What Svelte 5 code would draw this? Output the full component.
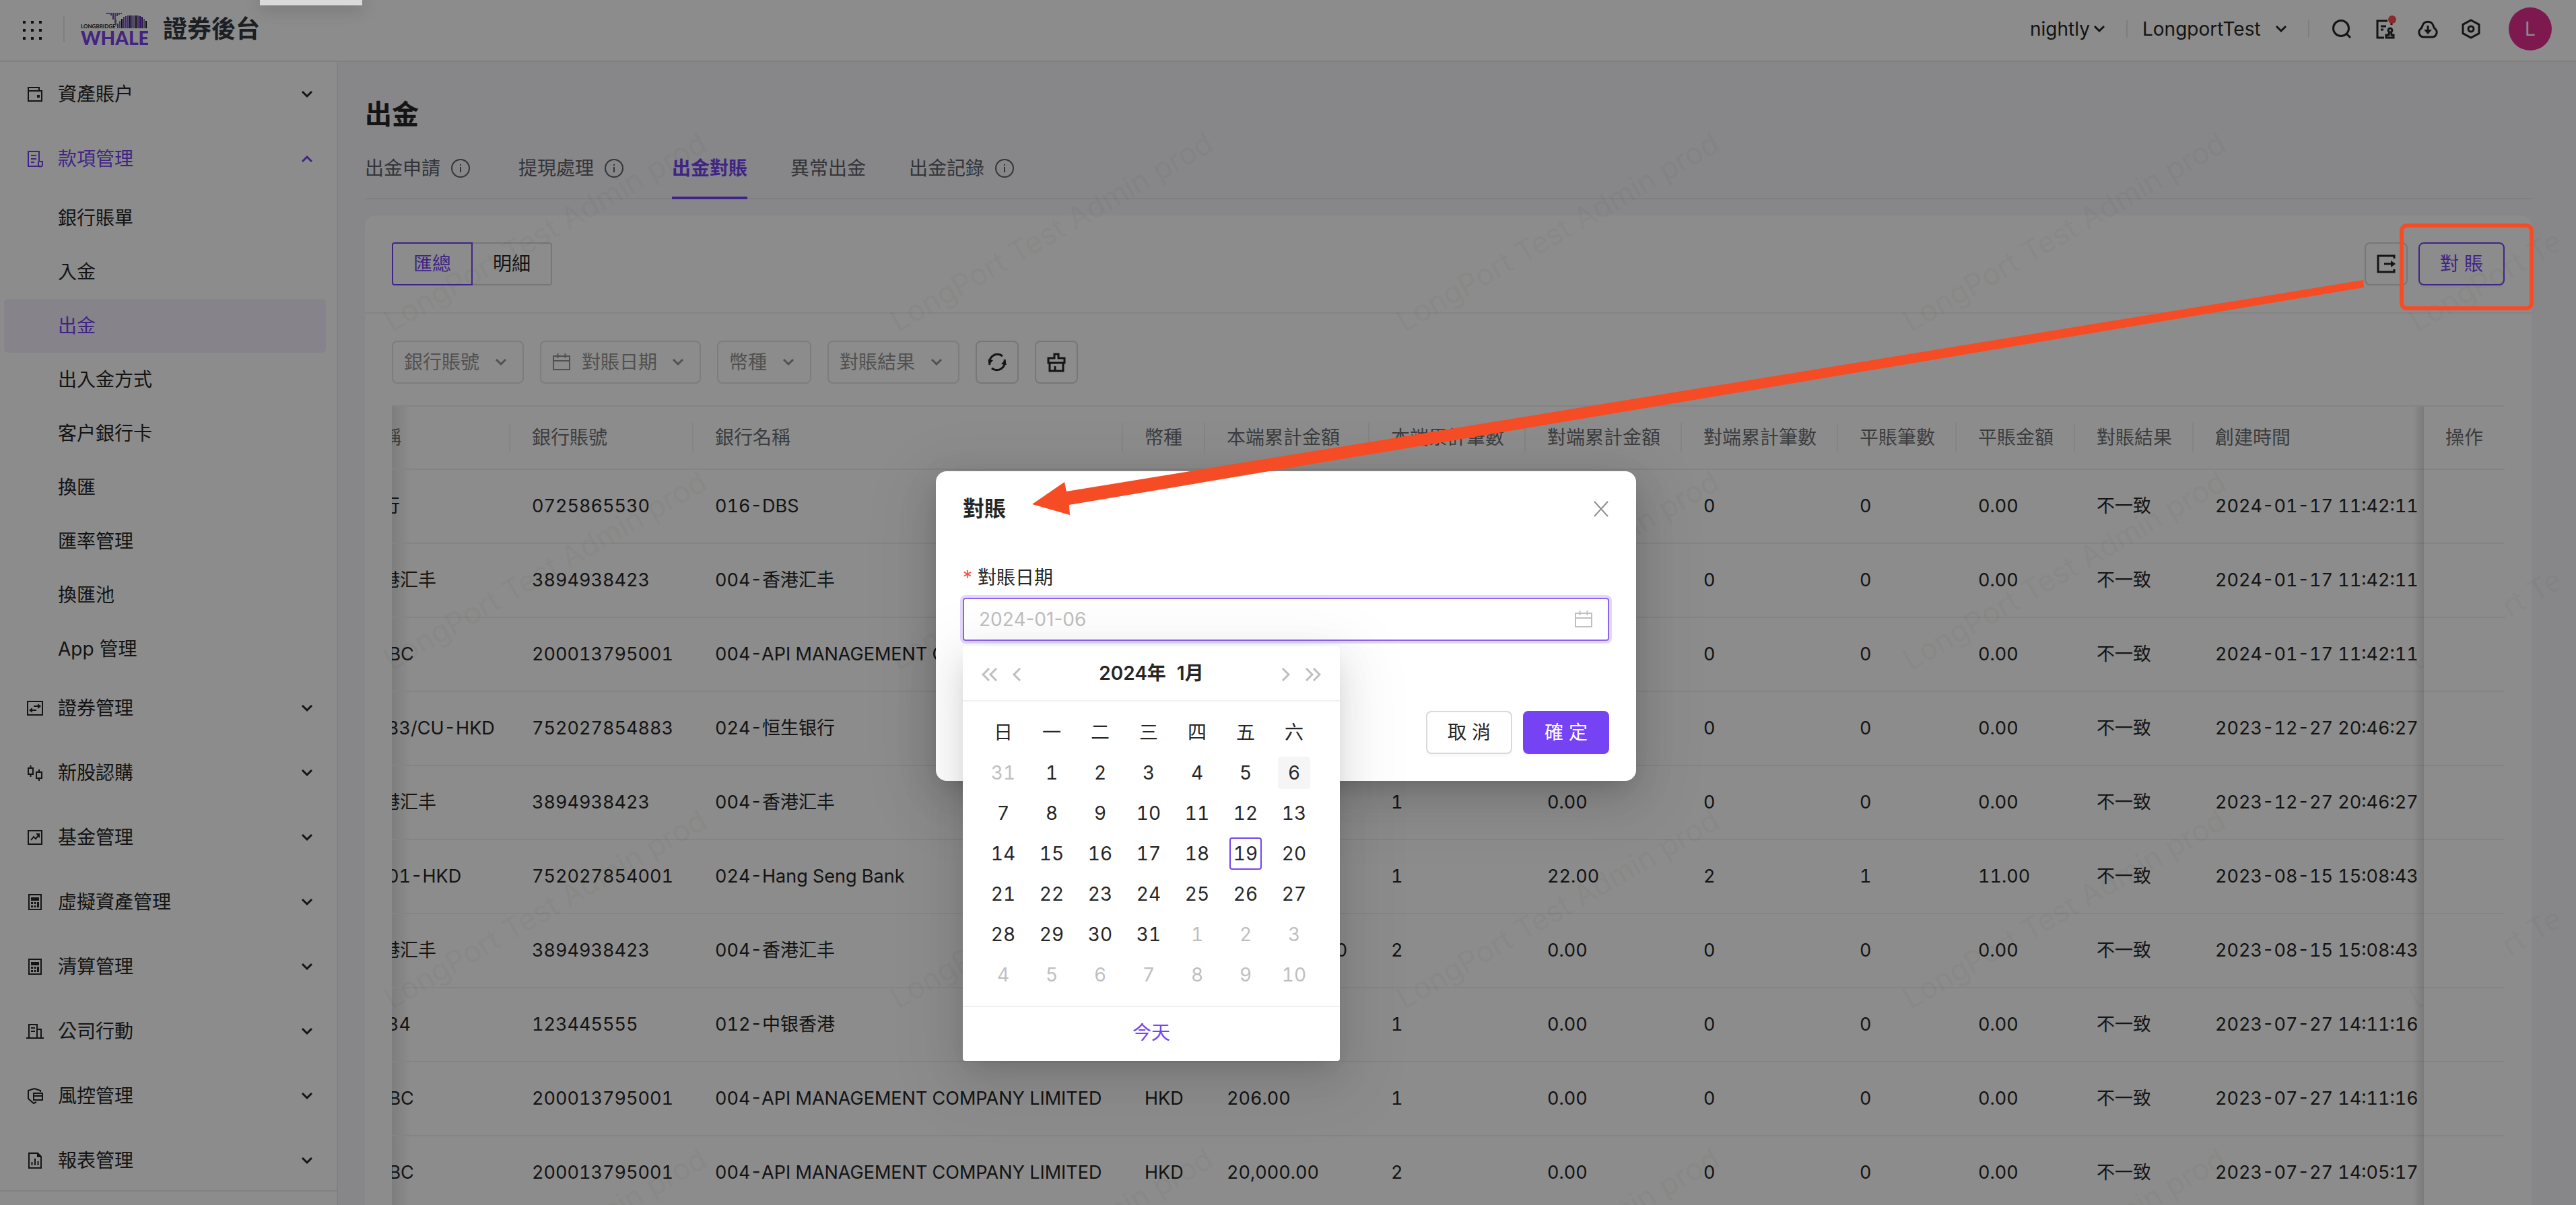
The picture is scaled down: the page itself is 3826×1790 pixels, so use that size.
<script>
  const menuBefore = [{ label: '資產賬户', icon: 'wallet' }];
  const subItems = ['銀行賬單', '入金', '出金', '出入金方式', '客户銀行卡', '換匯', '匯率管理', '換匯池', 'App 管理'];
  const menuAfter = [
    { label: '證券管理', icon: 'exchange' },
    { label: '新股認購', icon: 'candles' },
    { label: '基金管理', icon: 'trend' },
    { label: '虛擬資產管理', icon: 'calc' },
    { label: '清算管理', icon: 'calc' },
    { label: '公司行動', icon: 'building' },
    { label: '風控管理', icon: 'shield' },
    { label: '報表管理', icon: 'report' }
  ];

  const tabs = [
    { label: '出金申請', info: true },
    { label: '提現處理', info: true },
    { label: '出金對賬', active: true },
    { label: '異常出金' },
    { label: '出金記錄', info: true }
  ];

  const columns = [
    '名稱', '銀行賬號', '銀行名稱', '幣種', '本端累計金額', '本端累計筆數', '對端累計金額',
    '對端累計筆數', '平賬筆數', '平賬金額', '對賬結果', '創建時間', '操作'
  ];

  const rows = [
    ['銀行', '0725865530', '016-DBS', 'HKD', '0.00', '1', '0.00', '0', '0', '0.00', '不一致', '2024-01-17 11:42:11'],
    ['香港汇丰', '3894938423', '004-香港汇丰', 'HKD', '0.00', '1', '0.00', '0', '0', '0.00', '不一致', '2024-01-17 11:42:11'],
    ['HSBC', '200013795001', '004-API MANAGEMENT COMPANY LIMITED', 'HKD', '0.00', '1', '0.00', '0', '0', '0.00', '不一致', '2024-01-17 11:42:11'],
    ['4883/CU-HKD', '752027854883', '024-恒生银行', 'HKD', '0.00', '1', '0.00', '0', '0', '0.00', '不一致', '2023-12-27 20:46:27'],
    ['香港汇丰', '3894938423', '004-香港汇丰', 'HKD', '100.00', '1', '0.00', '0', '0', '0.00', '不一致', '2023-12-27 20:46:27'],
    ['4001-HKD', '752027854001', '024-Hang Seng Bank', 'HKD', '11.00', '1', '22.00', '2', '1', '11.00', '不一致', '2023-08-15 15:08:43'],
    ['香港汇丰', '3894938423', '004-香港汇丰', 'HKD', '2,000,000.00', '2', '0.00', '0', '0', '0.00', '不一致', '2023-08-15 15:08:43'],
    ['1234', '123445555', '012-中银香港', 'HKD', '100.00', '1', '0.00', '0', '0', '0.00', '不一致', '2023-07-27 14:11:16'],
    ['HSBC', '200013795001', '004-API MANAGEMENT COMPANY LIMITED', 'HKD', '206.00', '1', '0.00', '0', '0', '0.00', '不一致', '2023-07-27 14:11:16'],
    ['HSBC', '200013795001', '004-API MANAGEMENT COMPANY LIMITED', 'HKD', '20,000.00', '2', '0.00', '0', '0', '0.00', '不一致', '2023-07-27 14:05:17']
  ];

  const weekdays = ['日', '一', '二', '三', '四', '五', '六'];
  const weeks = Array.from({ length: 6 }, (_, w) =>
    Array.from({ length: 7 }, (_, d) => {
      const n = w * 7 + d;
      if (n === 0) return { day: 31, out: true };
      if (n > 31) return { day: n - 31, out: true };
      return { day: n, hover: n === 6, today: n === 19 };
    })
  );

  /* x, top, bottom, tone of each stripe of the whale */
  const stripes = [
    [38, 0, 2, 'v'], [41, 0, 2, 'v'], [44, 0, 4, 'v'], [47, 0, 10, 'v'], [50, 0, 16, 'g'], [53, 0, 5, 'v'],
    [56, 0, 3, 'g'], [59, 0, 2, 'v'], [51, 10, 19, 'g'], [54, 16, 23, 'v'], [57, 12, 23, 'g'], [60, 9, 23, 'k'], [63, 6, 23, 'v'],
    [66, 5, 23, 'v'], [69, 4, 23, 'v'], [72, 4, 23, 'k'], [75, 4, 23, 'v'], [78, 4, 23, 'g'], [81, 4, 23, 'k'],
    [84, 4, 23, 'v'], [87, 5, 23, 'd'], [90, 6, 23, 'd'], [93, 9, 23, 'g'], [96, 12, 23, 'k']
  ];
</script>

{#snippet chevron(up)}
  <svg class="chev" viewBox="0 0 20 12" aria-hidden="true">
    <path d={up ? 'M3 10L10 3l7 7' : 'M3 2l7 7 7-7'} />
  </svg>
{/snippet}

{#snippet calendarIcon()}
  <svg class="ico cal-ico" viewBox="0 0 28 28" aria-hidden="true">
    <path d="M2 5h24v20H2zM2 12h24M8.500 1v7M19.500 1v7" />
  </svg>
{/snippet}

{#snippet menuIcon(name)}
  <svg class="ico" viewBox="0 0 28 28" aria-hidden="true">
    {#if name === 'wallet'}
      <path d="M20 9V4H4v20h20V9H4" /><path class="fill" d="M17 15h4v4h-4z" />
    {:else if name === 'funds'}
      <path d="M20 18V3H4v22h17M20 18h5v4a3 3 0 0 1-6 1v-5M8 9h8M8 14h8M8 19h5" />
    {:else if name === 'exchange'}
      <path d="M3 4h22v20H3z" /><path d="M12 11h9M16 17H7" /><path class="fill" d="M18 7l5 4-5 4zM10 13l-5 4 5 4z" />
    {:else if name === 'candles'}
      <path d="M4 7h7v9H4zM7.500 3v4M7.500 16v4M16 13h8v9h-8zM20 9v4M20 22v4" />
    {:else if name === 'trend'}
      <path d="M4 4h20v20H4z" /><path d="M8 18l4-5 3 3 5-6" /><path class="fill" d="M15 8h6v7z" />
    {:else if name === 'calc'}
      <path d="M5 3h18v22H5z" />
      <path class="fill" d="M8 7h12v5H8zM8 14h3v3H8zM12.500 14h3v3h-3zM8 19h3v3H8zM12.500 19h3v3h-3zM17 14h3v8h-3z" />
    {:else if name === 'building'}
      <path d="M1 24h26M5 24V4h12v20M17 11h6v13M8 9h6M8 14h6" />
    {:else if name === 'shield'}
      <path d="M22 8V6L13 3 4 6v12l8 7 4-2" /><path d="M12 10h13v10H12zM12 14h13" />
    {:else if name === 'report'}
      <path d="M5 3h13l5 5v17H5z" /><path d="M9.500 16v5M14 11v10M18.500 15v6" /><path class="fill" d="M17 2l7 7h-7z" />
    {/if}
  </svg>
{/snippet}

{#snippet menuItem(item)}
  <button class="item" type="button">
    {@render menuIcon(item.icon)}
    <span>{item.label}</span>
    {@render chevron(false)}
  </button>
{/snippet}

<div class="page">
  <header class="top">
    <button class="apps" type="button" aria-label="應用">
      {#each Array(9) as _}<i></i>{/each}
    </button>
    <span class="rule tall"></span>
    <svg class="logo" viewBox="0 0 100 50" role="img" aria-label="Longbridge Whale">
      {#each stripes as [x, top, bottom, tone]}
        <rect class={tone} {x} y={top + 1} width="2" height={bottom - top} />
      {/each}
      <text class="brand-small" x="0" y="24">LONGBRIDGE</text>
      <text class="brand-big" x="0" y="49">WHALE</text>
    </svg>
    <strong class="product">證券後台</strong>
    <div class="right">
      <label class="env">
        <select aria-label="環境"><option>nightly</option></select>
        {@render chevron(false)}
      </label>
      <span class="rule"></span>
      <label class="org">
        <select aria-label="機構"><option>LongportTest</option></select>
        {@render chevron(false)}
      </label>
      <span class="rule"></span>
      <div class="tools">
        <button type="button" aria-label="搜索">
          <svg class="tool" viewBox="0 0 32 32"><circle cx="15" cy="15" r="11.500" /><path d="M23 23l6 6" /></svg>
        </button>
        <button type="button" class="badge" aria-label="審批">
          <svg class="tool" viewBox="0 0 32 32">
            <path d="M20 4H5v25h10M26 7v3M10 12h8M10 17h4" />
            <path d="M24 15a3 3 0 0 1 1.500 5.500l.5 4.500h3v4H18v-4h4l.5-4.500A3 3 0 0 1 24 15z" />
          </svg>
        </button>
        <button type="button" aria-label="下載">
          <svg class="tool" viewBox="0 0 32 32">
            <path d="M9 28a7 7 0 0 1-4-12c2-1 2-2 3-5a8.500 8.500 0 0 1 16 0c1 3 1 4 3 5a7 7 0 0 1-4 12zM16 11v8" />
            <path class="fill" d="M10 17h12l-6 7z" />
          </svg>
        </button>
        <button type="button" aria-label="設置">
          <svg class="tool" viewBox="0 0 32 32"><path d="M16 3l12 6.500v13L16 29 4 22.500v-13z" /><circle cx="16" cy="16" r="4" /></svg>
        </button>
      </div>
      <button class="avatar" type="button">L</button>
    </div>
  </header>

  <div class="body">
    <aside class="side">
      <nav class="menu">
        {#each menuBefore as item}{@render menuItem(item)}{/each}
        <button class="item open" type="button">
          {@render menuIcon('funds')}
          <span>款項管理</span>
          {@render chevron(true)}
        </button>
        {#each subItems as label}
          <a href="#top" class="sub" class:current={label === '出金'}>{label}</a>
        {/each}
        {#each menuAfter as item}{@render menuItem(item)}{/each}
      </nav>
      <div class="side-foot"></div>
    </aside>

    <main class="main">
      <svg class="watermark" aria-hidden="true">
        <defs>
          <pattern id="mark" width="752" height="503" patternUnits="userSpaceOnUse">
            <text x="80" y="402" transform="rotate(-30 80 402)">LongPort Test Admin prod</text>
          </pattern>
        </defs>
        <rect width="100%" height="100%" fill="url(#mark)" />
      </svg>

      <h1>出金</h1>
      <div class="tabs" role="tablist">
        {#each tabs as tab}
          <button class="tab" class:active={tab.active} type="button" role="tab" aria-selected={!!tab.active}>
            {tab.label}
            {#if tab.info}
              <svg class="info" viewBox="0 0 28 28" aria-hidden="true">
                <circle cx="14" cy="14" r="13" /><path d="M14 12v8M14 8v2" />
              </svg>
            {/if}
          </button>
        {/each}
      </div>

      <section class="card">
        <div class="card-head">
          <div class="segment">
            <label class="seg on"><input type="radio" name="view" checked />匯總</label>
            <label class="seg"><input type="radio" name="view" />明細</label>
          </div>
          <div class="actions">
            <button class="square" type="button" aria-label="導出">
              <svg class="tool" viewBox="0 0 32 32">
                <path d="M28 8V4H4v24h24v-4M13 16h13" /><path class="fill" d="M23 11l7 5-7 5z" />
              </svg>
            </button>
            <button class="btn outline" type="button">對 賬</button>
          </div>
        </div>

        <div class="filters">
          <label class="filter"><select aria-label="銀行賬號"><option>銀行賬號</option></select>{@render chevron(false)}</label>
          <button class="filter" type="button">{@render calendarIcon()}<span>對賬日期</span>{@render chevron(false)}</button>
          <label class="filter"><select aria-label="幣種"><option>幣種</option></select>{@render chevron(false)}</label>
          <label class="filter"><select aria-label="對賬結果"><option>對賬結果</option></select>{@render chevron(false)}</label>
          <button class="square" type="button" aria-label="刷新">
            <svg class="tool" viewBox="0 0 32 32">
              <path d="M5 20A12 12 0 0 1 24 7M27 12a12 12 0 0 1-19 13" />
              <path class="fill" d="M2 12l8 1-5 6zM30 20l-8-1 5-6z" />
            </svg>
          </button>
          <button class="square" type="button" aria-label="清除">
            <svg class="tool" viewBox="0 0 32 32">
              <path d="M13 10V4h6v6h9v7H4v-7zM6 17v12h20V17M14 22v7" />
            </svg>
          </button>
        </div>

        <div class="table-wrap">
          <table class="grid">
            <colgroup>
              <col class="c-first" /><col class="c-acct" /><col /><col class="c-cur" /><col class="c-amt" />
              <col class="c-cnt" /><col class="c-cnt" /><col class="c-cnt" />
              <col class="c-short" /><col class="c-short" /><col class="c-short" />
              <col class="c-time" /><col class="c-op" />
            </colgroup>
            <thead>
              <tr>{#each columns as c}<th scope="col"><span>{c}</span></th>{/each}</tr>
            </thead>
            <tbody>
              {#each rows as row}
                <tr>{#each row as cell}<td><span>{cell}</span></td>{/each}<td></td></tr>
              {/each}
            </tbody>
          </table>
        </div>
      </section>
    </main>
  </div>

  <div class="mask">
    <div class="modal" role="dialog" aria-labelledby="dialog-title">
      <div class="modal-head">
        <h2 id="dialog-title">對賬</h2>
        <button class="close" type="button" aria-label="關閉">
          <svg viewBox="0 0 24 24"><path d="M2 1l20 22M22 1L2 23" /></svg>
        </button>
      </div>
      <label class="field-label" for="recon-date"><span class="req">*</span>對賬日期</label>
      <div class="field">
        <input id="recon-date" type="text" placeholder="2024-01-06" />
        {@render calendarIcon()}
        <div class="picker">
          <div class="picker-head">
            <button type="button" aria-label="上一年"><svg viewBox="0 0 24 20"><path d="M11 1l-9 9 9 9M22 1l-9 9 9 9" /></svg></button>
            <button type="button" aria-label="上個月"><svg viewBox="0 0 24 20"><path d="M17 1l-9 9 9 9" /></svg></button>
            <div class="picker-title"><button type="button">2024年</button><button type="button">1月</button></div>
            <button type="button" aria-label="下個月"><svg viewBox="0 0 24 20"><path d="M7 1l9 9-9 9" /></svg></button>
            <button type="button" aria-label="下一年"><svg viewBox="0 0 24 20"><path d="M2 1l9 9-9 9M13 1l9 9-9 9" /></svg></button>
          </div>
          <table class="days">
            <thead><tr>{#each weekdays as d}<th scope="col">{d}</th>{/each}</tr></thead>
            <tbody>
              {#each weeks as week}
                <tr>
                  {#each week as d}
                    <td><button type="button" class="day" class:out={d.out} class:hover={d.hover} class:today={d.today}>{d.day}</button></td>
                  {/each}
                </tr>
              {/each}
            </tbody>
          </table>
          <div class="picker-foot"><a href="#today">今天</a></div>
        </div>
      </div>
      <div class="modal-foot">
        <button class="btn" type="button">取 消</button>
        <button class="btn primary" type="button">確 定</button>
      </div>
    </div>
  </div>

  <div class="tip"></div>
  <svg class="callout" viewBox="0 0 3826 1790" aria-hidden="true">
    <rect x="3567" y="335" width="193" height="123" rx="8" />
    <polygon points="1533,749 1581,716 1584,730 3510,416 3511,427 1588,750 1589,765" />
  </svg>
</div>

<style>
  :global(body) {
    margin: 0;
    overflow: hidden;
  }

  .page {
    --primary: #7543f3;
    --text: #262626;
    --line: #f0f0f0;
    position: relative;
    display: flex;
    flex-direction: column;
    height: 100vh;
    overflow: hidden;
    background: #fff;
    color: var(--text);
    font: 28px/44px Inter, 'Noto Sans CJK TC', sans-serif;
  }
  .page * {
    box-sizing: border-box;
  }
  button,
  select,
  input {
    margin: 0;
    padding: 0;
    border: 0;
    background: none;
    color: inherit;
    font: inherit;
  }
  select {
    appearance: none;
    outline: 0;
  }
  a {
    color: inherit;
    text-decoration: none;
  }
  svg {
    flex: none;
    fill: none;
    stroke: currentColor;
    stroke-width: 2;
  }
  .fill {
    fill: currentColor;
    stroke: none;
  }
  .ico {
    width: 28px;
    height: 28px;
  }
  .chev {
    width: 20px;
    height: 12px;
    stroke-width: 3;
  }
  .tool {
    display: block;
    width: 32px;
    height: 32px;
    stroke-width: 3;
  }

  /* top bar */
  .top {
    display: flex;
    flex: none;
    align-items: center;
    height: 92px;
    padding: 0 36px 4px 34px;
    border-bottom: 2px solid #e9e9ee;
  }
  .apps {
    display: grid;
    grid-template-columns: repeat(3, 4px);
    gap: 8px;
    margin-top: 4px;
  }
  .apps i {
    width: 4px;
    height: 4px;
    background: #1c1c1c;
  }
  .rule {
    width: 2px;
    height: 26px;
    background: #e6e6e6;
  }
  .rule.tall {
    height: 40px;
    margin: 0 24px 0 32px;
  }
  .logo {
    width: 100px;
    height: 50px;
    stroke: none;
  }
  .logo .v { fill: #6f3fd0; }
  .logo .d { fill: #3c0a94; }
  .logo .g { fill: #77708a; }
  .logo .k { fill: #111; }
  .brand-small {
    fill: #222;
    font: 700 8px Lato, sans-serif;
  }
  .brand-big {
    fill: #7d41ec;
    font: 900 28px Lato, sans-serif;
  }
  .product {
    margin-left: 22px;
    color: #343a41;
    font-size: 36px;
    font-weight: 700;
  }
  .right {
    display: flex;
    align-items: center;
    margin-left: auto;
  }
  .env,
  .org {
    display: flex;
    align-items: center;
  }
  .env {
    gap: 4px;
    margin-right: 30px;
  }
  .org {
    gap: 20px;
    margin: 0 30px 0 22px;
  }
  .tools {
    display: flex;
    gap: 32px;
    margin: 0 40px 0 32px;
  }
  .badge {
    position: relative;
  }
  .badge::after {
    content: '';
    position: absolute;
    top: -4px;
    right: -1px;
    width: 12px;
    height: 12px;
    border-radius: 50%;
    background: #ff4d4f;
  }
  .avatar {
    width: 64px;
    height: 64px;
    border-radius: 50%;
    background: #e52f91;
    color: #fff;
  }

  /* side menu */
  .body {
    display: flex;
    flex: 1;
    min-height: 0;
  }
  .side {
    display: flex;
    flex: none;
    flex-direction: column;
    width: 502px;
    border-right: 2px solid #ececf1;
  }
  .menu {
    display: flex;
    flex: 1;
    flex-direction: column;
    min-height: 0;
    overflow: hidden;
  }
  .item {
    display: flex;
    flex: none;
    align-items: center;
    gap: 20px;
    height: 96px;
    padding: 0 34px 0 38px;
    text-align: left;
  }
  .item .chev {
    margin-left: auto;
  }
  .item.open,
  .sub.current {
    color: var(--primary);
  }
  .sub {
    flex: none;
    height: 80px;
    margin: 0 16px 0 6px;
    padding-left: 80px;
    border-radius: 6px;
    line-height: 80px;
  }
  .sub.current {
    background: #f5effd;
  }
  .side-foot {
    flex: none;
    height: 22px;
    border-top: 2px solid #ececf1;
  }

  /* page content */
  .main {
    position: relative;
    flex: 1;
    min-width: 0;
    padding: 50px 66px 0 40px;
    overflow: hidden;
    background: #f6f6fb;
  }
  .watermark {
    position: absolute;
    top: 0;
    left: 0;
    z-index: 1;
    width: calc(100% - 26px);
    height: 100%;
    stroke: none;
    pointer-events: none;
  }
  .watermark text {
    fill: rgba(60, 60, 40, 0.045);
    font: 44px Inter, sans-serif;
  }
  h1 {
    margin: 0;
    font-size: 40px;
    font-weight: 700;
    line-height: 56px;
  }
  .tabs {
    display: flex;
    gap: 64px;
    height: 98px;
    border-bottom: 2px solid #e8e8ea;
  }
  .tab {
    display: flex;
    align-items: center;
    gap: 16px;
    height: 98px;
    padding-top: 6px;
    color: #5e6268;
  }
  .tab.active {
    border-bottom: 4px solid var(--primary);
    padding-top: 10px;
    color: var(--primary);
    font-weight: 600;
  }
  .info {
    width: 28px;
    height: 28px;
    margin-right: 8px;
  }
  .card {
    margin-top: 24px;
    border-radius: 16px 16px 0 0;
    background: #fff;
  }
  .card-head {
    display: flex;
    justify-content: space-between;
    padding: 40px;
    border-bottom: 2px solid var(--line);
  }
  .segment {
    display: flex;
  }
  .seg {
    height: 64px;
    padding: 0 30px;
    border: 2px solid #d9d9d9;
    border-radius: 0 4px 4px 0;
    line-height: 60px;
  }
  .seg.on {
    z-index: 1;
    margin-right: -2px;
    border-color: var(--primary);
    border-radius: 4px 0 0 4px;
    color: var(--primary);
  }
  .seg input {
    position: absolute;
    opacity: 0;
  }
  .actions {
    display: flex;
    gap: 16px;
  }
  .square {
    display: flex;
    align-items: center;
    justify-content: center;
    width: 64px;
    height: 64px;
    border: 2px solid #d9d9d9;
    border-radius: 8px;
  }
  .btn {
    width: 128px;
    height: 64px;
    border: 2px solid #d9d9d9;
    border-radius: 8px;
    background: #fff;
    box-shadow: 0 4px 0 rgba(0, 0, 0, 0.02);
  }
  .btn.outline {
    border-color: var(--primary);
    color: var(--primary);
  }
  .btn.primary {
    border-color: var(--primary);
    background: var(--primary);
    color: #fff;
  }
  .filters {
    display: flex;
    gap: 24px;
    padding: 40px 40px 32px;
  }
  .filter {
    display: flex;
    align-items: center;
    height: 64px;
    padding: 0 22px 0 16px;
    border: 2px solid #e3e3e3;
    border-radius: 8px;
    color: #949494;
  }
  .filter .chev {
    margin-left: 21px;
  }
  .filter .ico {
    margin-right: 16px;
  }

  /* table */
  .table-wrap {
    position: relative;
    margin: 0 40px;
    overflow: hidden;
  }
  .table-wrap::before {
    content: '';
    position: absolute;
    top: 0;
    bottom: 0;
    left: 0;
    width: 28px;
    background: linear-gradient(to right, rgba(0, 0, 0, 0.1), transparent);
  }
  .grid {
    width: 100%;
    border-spacing: 0;
    table-layout: fixed;
  }
  .c-first { width: 176px; }
  .c-acct { width: 272px; }
  .c-cur { width: 122px; }
  .c-amt { width: 244px; }
  .c-cnt { width: 232px; }
  .c-short { width: 176px; }
  .c-time { width: 342px; }
  .c-op { width: 120px; }
  .grid th,
  .grid td {
    position: relative;
    height: 110px;
    padding: 0 0 0 32px;
    border-bottom: 2px solid var(--line);
    text-align: left;
    white-space: nowrap;
  }
  .grid td {
    font-size: 27px;
    font-variant-numeric: tabular-nums;
  }
  .grid th {
    height: 96px;
    border-top: 2px solid var(--line);
    color: #6d7074;
    font-weight: 400;
  }
  .grid th::before {
    content: '';
    position: absolute;
    top: 24px;
    right: 0;
    width: 2px;
    height: 44px;
    background: var(--line);
  }
  .grid th:nth-last-child(-n + 2)::before {
    display: none;
  }
  .grid th:first-child span,
  .grid td:first-child span {
    margin-left: -74px;
  }
  .grid th:last-child,
  .grid td:last-child {
    z-index: 2;
    background: #fff;
  }
  .grid th:last-child::after,
  .grid td:last-child::after {
    content: '';
    position: absolute;
    top: 0;
    right: 100%;
    bottom: -2px;
    width: 16px;
    background: linear-gradient(to left, rgba(0, 0, 0, 0.12), transparent);
  }

  /* dialog */
  .mask {
    position: absolute;
    inset: 0;
    z-index: 3;
    display: flex;
    align-items: flex-start;
    justify-content: center;
    padding: 700px 6px 0 0;
    background: rgba(0, 0, 0, 0.45);
  }
  .modal {
    width: 1040px;
    padding: 32px 40px 40px;
    border-radius: 16px;
    background: #fff;
    box-shadow: 0 12px 32px -16px rgba(0, 0, 0, 0.12), 0 18px 56px rgba(0, 0, 0, 0.16), 0 24px 96px 32px rgba(0, 0, 0, 0.05);
  }
  .modal-head {
    display: flex;
    align-items: center;
    justify-content: space-between;
    height: 48px;
    margin-bottom: 56px;
  }
  h2 {
    margin: 0;
    font-size: 32px;
    font-weight: 600;
    line-height: 48px;
  }
  .close {
    width: 24px;
    color: #8c8c8c;
  }
  .close svg {
    display: block;
    width: 24px;
    height: 24px;
  }
  .field-label {
    display: flex;
    gap: 8px;
    margin-bottom: 8px;
  }
  .req {
    color: #ff4d4f;
  }
  .field {
    position: relative;
    display: flex;
    align-items: center;
    height: 64px;
    padding: 0 22px;
    border: 2px solid #8f63f2;
    border-radius: 4px;
    box-shadow: 0 0 0 4px #e3d9fc;
  }
  .field input {
    flex: 1;
    outline: 0;
  }
  .field input::placeholder {
    color: #bfbfbf;
    opacity: 1;
  }
  .field .cal-ico {
    color: #bfbfbf;
  }
  .modal-foot {
    display: flex;
    justify-content: flex-end;
    gap: 16px;
    margin-top: 104px;
  }

  /* date picker */
  .picker {
    position: absolute;
    top: 70px;
    left: -2px;
    width: 560px;
    border-radius: 4px;
    background: #fff;
    box-shadow: 0 12px 32px -16px rgba(0, 0, 0, 0.12), 0 18px 56px rgba(0, 0, 0, 0.1), 0 24px 96px 32px rgba(0, 0, 0, 0.05);
  }
  .picker-head {
    display: flex;
    align-items: center;
    gap: 16px;
    height: 82px;
    padding: 0 28px;
    border-bottom: 2px solid var(--line);
  }
  .picker-head svg {
    display: block;
    width: 24px;
    height: 20px;
    margin-top: 4px;
    color: #bfbfbf;
    stroke-width: 3;
  }
  .picker-title {
    display: flex;
    flex: 1;
    gap: 16px;
    justify-content: center;
    font-weight: 600;
  }
  .days {
    margin: 16px 24px;
    border-spacing: 0;
    table-layout: fixed;
    font-variant-numeric: tabular-nums;
  }
  .days th,
  .days td {
    width: 72px;
    height: 60px;
    padding: 0;
    font-weight: 400;
    text-align: center;
  }
  .day {
    width: 48px;
    height: 48px;
    border-radius: 4px;
    font-variant-numeric: tabular-nums;
    line-height: 44px;
  }
  .day.out {
    color: #bfbfbf;
  }
  .day.hover {
    background: #f5f5f5;
  }
  .day.today {
    border: 2px solid var(--primary);
  }
  .picker-foot {
    height: 82px;
    border-top: 2px solid var(--line);
    color: var(--primary);
    line-height: 76px;
    text-align: center;
  }

  /* overlays */
  .tip {
    position: absolute;
    top: 0;
    left: 386px;
    z-index: 4;
    width: 152px;
    height: 8px;
    background: #dadada;
    box-shadow: 0 4px 24px rgba(0, 0, 0, 0.3);
  }
  .callout {
    position: absolute;
    top: 0;
    left: 0;
    z-index: 5;
    width: 100%;
    color: #f64c25;
    pointer-events: none;
  }
  .callout rect {
    stroke-width: 6;
  }
  .callout polygon {
    fill: currentColor;
    stroke: none;
  }
</style>
